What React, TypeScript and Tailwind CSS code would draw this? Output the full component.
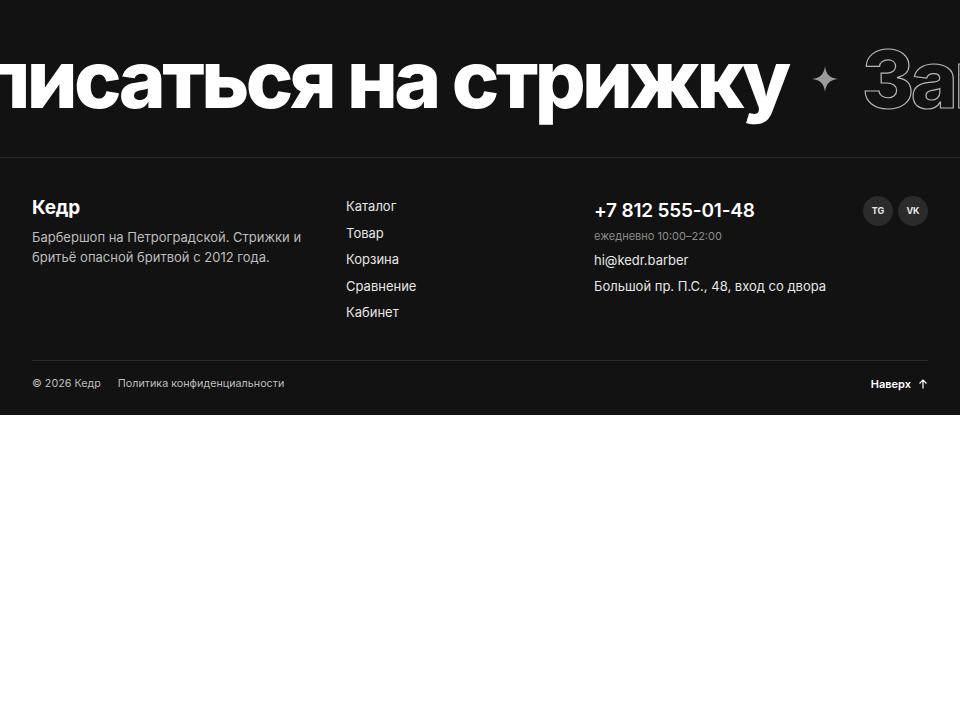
const NAV = ["Каталог", "Товар", "Корзина", "Сравнение", "Кабинет"]

const PHRASE = "Записаться на стрижку"

const Star = () => (
    <svg width="26" height="26" viewBox="0 0 24 24" className="shrink-0 text-[#9a9a9a]">
        <path d="M12 0 C12.8 7.5 16.5 11.2 24 12 C16.5 12.8 12.8 16.5 12 24 C11.2 16.5 7.5 12.8 0 12 C7.5 11.2 11.2 7.5 12 0 Z" fill="currentColor" />
    </svg>
)

const Marquee = () => {
    const items = [0, 1, 2]
    return (
        <div className="overflow-hidden border-b border-[#262626] h-[158px] flex items-center">
            <div className="flex items-center gap-[24px] whitespace-nowrap -translate-x-[112px]">
                {items.map(i => (
                    <div key={i} className="flex items-center gap-[24px]">
                        <span
                            className={
                                i % 2 === 0
                                    ? "text-[80px] font-extrabold tracking-[-0.045em] leading-none text-white"
                                    : "text-[80px] font-extrabold tracking-[-0.045em] leading-none text-transparent [-webkit-text-stroke:1.2px_#b5b5b5]"
                            }
                        >
                            {PHRASE}
                        </span>
                        <Star />
                    </div>
                ))}
            </div>
        </div>
    )
}

const Footer = () => {
    return (
        <footer className="px-8">
            <div className="grid grid-cols-[274px_208px_minmax(0,1fr)_auto] gap-x-10 pt-[38px] pb-[39px]">
                <div className="flex flex-col">
                    <h3 className="-mt-[1px] text-[19px] font-bold text-white leading-[26px] tracking-[-0.01em]">Кедр</h3>
                    <p className="mt-[6px] text-[13px] leading-[20px] text-[#bdbdbd]">
                        Барбершоп на Петроградской. Стрижки и бритьё опасной бритвой с 2012 года.
                    </p>
                </div>

                <nav className="flex flex-col gap-[8.5px] pt-[1px]">
                    {NAV.map(link => (
                        <a key={link} href="/" className="text-[13px] leading-[18px] text-[#e6e6e6]">
                            {link}
                        </a>
                    ))}
                </nav>

                <div className="flex flex-col whitespace-nowrap">
                    <a href="/" className="text-[19px] font-semibold text-white leading-[26px] tracking-[-0.01em] pt-[2px]">
                        +7 812 555-01-48
                    </a>
                    <span className="mt-[4px] text-[11px] leading-[16px] text-[#8c8c8c]">ежедневно 10:00–22:00</span>
                    <a href="/" className="mt-[6px] text-[13px] leading-[20px] text-[#e6e6e6]">hi@kedr.barber</a>
                    <span className="mt-[6px] text-[13px] leading-[20px] text-[#e6e6e6]">Большой пр. П.С., 48, вход со двора</span>
                </div>

                <div className="flex gap-[5px]">
                    {["TG", "VK"].map(s => (
                        <a
                            key={s}
                            href="/"
                            className="w-[30px] h-[30px] rounded-full bg-[#2b2b2b] flex items-center justify-center text-[9px] font-bold text-[#e6e6e6]"
                        >
                            {s}
                        </a>
                    ))}
                </div>
            </div>

            <div className="border-t border-[#2c2c2c] flex items-center justify-between h-[55px] pb-[8px]">
                <div className="flex gap-[17px] text-[10.75px] text-[#bdbdbd]">
                    <span>© 2026 Кедр</span>
                    <a href="/">Политика конфиденциальности</a>
                </div>
                <a href="/" className="flex items-center gap-[7px] text-[11px] font-semibold text-white">
                    Наверх
                    <svg width="10" height="10" viewBox="0 0 10 10" fill="none" stroke="currentColor" strokeWidth="1.2">
                        <path d="M5 9.5V1M1.5 4.5L5 1l3.5 3.5" />
                    </svg>
                </a>
            </div>
        </footer>
    )
}

export default function App() {
    return (
        <div className="bg-[#121212] font-['Inter',sans-serif] overflow-hidden">
            <Marquee />
            <Footer />
        </div>
    )
}
